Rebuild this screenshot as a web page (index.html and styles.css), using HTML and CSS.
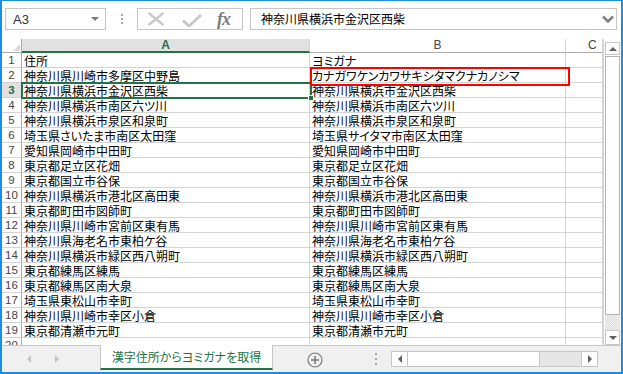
FILE: index.html
```html
<!DOCTYPE html>
<html lang="ja">
<head>
<meta charset="utf-8">
<title>Excel</title>
<link rel="stylesheet" href="styles.css">
</head>
<body>
<div class="window">
  <div class="fbar">
    <div class="namebox"><span>A3</span><span class="nb-arrow"></span></div>
    <div class="vdots"><i></i><i></i><i></i></div>
    <div class="fbtns">
      <svg class="ic-x" width="18" height="14" viewBox="0 0 18 14"><path d="M1.5 1 L16.5 13 M16.5 1 L1.5 13" stroke="#c8c8c8" stroke-width="2.3" fill="none"/></svg>
      <svg class="ic-ok" width="20" height="13" viewBox="0 0 20 13"><path d="M1 6.5 L7 12 L19 1" stroke="#c8c8c8" stroke-width="2.8" fill="none"/></svg>
      <span class="fx">fx</span>
    </div>
    <div class="finput"><span class="ftext">神奈川県横浜市金沢区西柴</span><svg class="chev" width="12" height="8" viewBox="0 0 12 8"><path d="M1 1.5 L6 6.5 L11 1.5" stroke="#808080" stroke-width="2.6" fill="none"/></svg></div>
  </div>

  <div class="sheet">
    <div class="grid">
      <div class="row hdr">
        <div class="c rh corner"><svg width="7" height="7" viewBox="0 0 7 7"><path d="M7 0 L7 7 L0 7 Z" fill="#dadada"/></svg></div>
        <div class="c ca sel">A</div>
        <div class="c cb">B</div>
        <div class="c cc">C</div>
      </div>
      <div class="row"><div class="c rh">1</div><div class="c ca">住所</div><div class="c cb">ヨミガナ</div><div class="c cc"></div></div>
      <div class="row"><div class="c rh">2</div><div class="c ca">神奈川県川崎市多摩区中野島</div><div class="c cb">カナガワケンカワサキシタマクナカノシマ</div><div class="c cc"></div></div>
      <div class="row"><div class="c rh selrow">3</div><div class="c ca">神奈川県横浜市金沢区西柴</div><div class="c cb">神奈川県横浜市金沢区西柴</div><div class="c cc"></div></div>
      <div class="row"><div class="c rh">4</div><div class="c ca">神奈川県横浜市南区六ツ川</div><div class="c cb">神奈川県横浜市南区六ツ川</div><div class="c cc"></div></div>
      <div class="row"><div class="c rh">5</div><div class="c ca">神奈川県横浜市泉区和泉町</div><div class="c cb">神奈川県横浜市泉区和泉町</div><div class="c cc"></div></div>
      <div class="row"><div class="c rh">6</div><div class="c ca">埼玉県さいたま市南区太田窪</div><div class="c cb">埼玉県サイタマ市南区太田窪</div><div class="c cc"></div></div>
      <div class="row"><div class="c rh">7</div><div class="c ca">愛知県岡崎市中田町</div><div class="c cb">愛知県岡崎市中田町</div><div class="c cc"></div></div>
      <div class="row"><div class="c rh">8</div><div class="c ca">東京都足立区花畑</div><div class="c cb">東京都足立区花畑</div><div class="c cc"></div></div>
      <div class="row"><div class="c rh">9</div><div class="c ca">東京都国立市谷保</div><div class="c cb">東京都国立市谷保</div><div class="c cc"></div></div>
      <div class="row"><div class="c rh">10</div><div class="c ca">神奈川県横浜市港北区高田東</div><div class="c cb">神奈川県横浜市港北区高田東</div><div class="c cc"></div></div>
      <div class="row"><div class="c rh">11</div><div class="c ca">東京都町田市図師町</div><div class="c cb">東京都町田市図師町</div><div class="c cc"></div></div>
      <div class="row"><div class="c rh">12</div><div class="c ca">神奈川県川崎市宮前区東有馬</div><div class="c cb">神奈川県川崎市宮前区東有馬</div><div class="c cc"></div></div>
      <div class="row"><div class="c rh">13</div><div class="c ca">神奈川県海老名市東柏ケ谷</div><div class="c cb">神奈川県海老名市東柏ケ谷</div><div class="c cc"></div></div>
      <div class="row"><div class="c rh">14</div><div class="c ca">神奈川県横浜市緑区西八朔町</div><div class="c cb">神奈川県横浜市緑区西八朔町</div><div class="c cc"></div></div>
      <div class="row"><div class="c rh">15</div><div class="c ca">東京都練馬区練馬</div><div class="c cb">東京都練馬区練馬</div><div class="c cc"></div></div>
      <div class="row"><div class="c rh">16</div><div class="c ca">東京都練馬区南大泉</div><div class="c cb">東京都練馬区南大泉</div><div class="c cc"></div></div>
      <div class="row"><div class="c rh">17</div><div class="c ca">埼玉県東松山市幸町</div><div class="c cb">埼玉県東松山市幸町</div><div class="c cc"></div></div>
      <div class="row"><div class="c rh">18</div><div class="c ca">神奈川県川崎市幸区小倉</div><div class="c cb">神奈川県川崎市幸区小倉</div><div class="c cc"></div></div>
      <div class="row"><div class="c rh">19</div><div class="c ca">東京都清瀬市元町</div><div class="c cb">東京都清瀬市元町</div><div class="c cc"></div></div>
      <div class="row"><div class="c rh">20</div><div class="c ca"></div><div class="c cb"></div><div class="c cc"></div></div>
      <div class="active-cell"><i class="handle"></i></div>
      <div class="mark"></div>
    </div>
    <div class="vscroll">
      <div class="sbtn"><i class="tri-up"></i></div>
      <div class="vthumb"></div>
      <div class="vtrack"></div>
      <div class="sbtn"><i class="tri-down"></i></div>
    </div>
  </div>

  <div class="tabbar">
    <div class="tabnav"><i class="tri-left pale"></i><i class="tri-right pale"></i></div>
    <div class="tab">漢字住所からヨミガナを取得</div>
    <svg class="addsheet" width="16" height="16" viewBox="0 0 16 16"><circle cx="8" cy="8" r="7" stroke="#7a7a7a" stroke-width="1.2" fill="none"/><path d="M8 4 V12 M4 8 H12" stroke="#7a7a7a" stroke-width="1.6"/></svg>
    <div class="hdots"><i></i><i></i><i></i></div>
    <div class="hscroll">
      <div class="hbtn"><i class="tri-left"></i></div>
      <div class="hthumb"></div>
      <div class="htrack"></div>
      <div class="hbtn right"><i class="tri-right"></i></div>
    </div>
  </div>
</div>
</body>
</html>
```

FILE: styles.css
```css
html, body {
  margin: 0;
  padding: 0;
  background: #fff;
}

.window {
  width: 623px;
  height: 374px;
  box-sizing: border-box;
  border: 2px solid #1c8de0;
  border-top-width: 1px;
  display: flex;
  flex-direction: column;
  background: #fff;
  overflow: hidden;
  font-family: "Noto Sans CJK JP", sans-serif;
  font-feature-settings: "palt";
}

/* ---------- formula bar ---------- */
.fbar {
  flex: none;
  height: 38px;
  box-sizing: border-box;
  padding: 7px 4px 0 3px;
  display: flex;
  align-items: flex-start;
}

.namebox {
  width: 101px;
  height: 22px;
  box-sizing: border-box;
  border: 1px solid #c6c6c6;
  display: flex;
  align-items: center;
  padding-left: 7px;
  font: 13px "Liberation Sans", sans-serif;
  color: #333;
}

.nb-arrow {
  margin-left: auto;
  margin-right: 6px;
  width: 0;
  height: 0;
  border-left: 4px solid transparent;
  border-right: 4px solid transparent;
  border-top: 4px solid #7a7a7a;
}

.vdots {
  width: 31px;
  height: 22px;
  display: flex;
  flex-direction: column;
  align-items: center;
  justify-content: center;
  gap: 2px;
}

.vdots i, .hdots i {
  display: block;
  width: 2px;
  height: 2px;
  background: #a8a8a8;
}

.fbtns {
  width: 106px;
  height: 22px;
  box-sizing: border-box;
  border: 1px solid #c6c6c6;
  display: flex;
  align-items: center;
  padding-left: 9px;
}

.ic-ok {
  margin-left: 17px;
  margin-top: 2px;
}

.fx {
  margin-left: 15px;
  font: italic bold 18px "Liberation Serif", serif;
  color: #7d7d7d;
  line-height: 18px;
  letter-spacing: -1px;
}

.finput {
  flex: 1;
  height: 22px;
  box-sizing: border-box;
  margin-left: 7px;
  border: 1px solid #c6c6c6;
  display: flex;
  align-items: center;
  padding-left: 10px;
  padding-right: 2px;
  font-size: 12px;
  color: #000;
}

.ftext {
  flex: 1;
  line-height: 14px;
}

/* ---------- sheet ---------- */
.sheet {
  flex: none;
  height: 306px;
  display: flex;
}

.grid {
  width: 601px;
  height: 306px;
  position: relative;
  overflow: hidden;
}

.row {
  display: flex;
  height: 15px;
}

.c {
  flex: none;
  box-sizing: border-box;
  height: 100%;
  border-right: 1px solid #d4d4d4;
  border-bottom: 1px solid #d4d4d4;
  padding-left: 2px;
  font-size: 12px;
  line-height: 15px;
  white-space: nowrap;
  overflow: hidden;
  color: #000;
}

.rh {
  width: 20px;
  padding-left: 0;
  text-align: center;
  font: 11.5px/15px "Liberation Sans", sans-serif;
  color: #444;
  border-right-color: #ababab;
}

.rh.selrow {
  background: #e1e1e1;
  color: #217346;
  font-weight: bold;
}

.ca { width: 288px; }
.cb { width: 256px; }
.cc { width: 37px; }

.row.hdr {
  height: 14px;
}

.hdr .c {
  border-bottom: 1px solid #ababab;
  border-right-color: #d4d4d4;
  text-align: center;
  font: 12px/13px "Liberation Sans", sans-serif;
  color: #444;
  padding-left: 0;
}

.hdr .corner {
  display: flex;
  align-items: flex-end;
  justify-content: flex-end;
  padding: 0 1px 1px 0;
  border-right-color: #ababab;
}

.hdr .sel {
  background: #e1e1e1;
  border-bottom: 2px solid #217346;
  color: #217346;
  font-weight: bold;
}

.hdr .cc {
  text-align: left;
  padding-left: 22px;
}

.active-cell {
  position: absolute;
  left: 19px;
  top: 43px;
  width: 291px;
  height: 17px;
  box-sizing: border-box;
  border: 2px solid #217346;
}

.handle {
  position: absolute;
  right: -4px;
  bottom: -4px;
  width: 6px;
  height: 6px;
  box-sizing: border-box;
  background: #217346;
  border: 1px solid #fff;
}

.mark {
  position: absolute;
  left: 308px;
  top: 28px;
  width: 260px;
  height: 19px;
  box-sizing: border-box;
  border: 2px solid #ff0000;
}

/* ---------- vertical scrollbar ---------- */
.vscroll {
  width: 18px;
  box-sizing: border-box;
  padding: 3px 1px 0 1px;
  display: flex;
  flex-direction: column;
  border-left: 1px solid #d4d4d4;
}

.sbtn {
  flex: none;
  height: 13px;
  box-sizing: border-box;
  border: 1px solid #c6c6c6;
  background: #fff;
  display: flex;
  align-items: center;
  justify-content: center;
}

.sbtn:last-child {
  height: 15px;
}

.vthumb {
  flex: none;
  height: 259px;
  margin-top: 1px;
  box-sizing: border-box;
  border: 1px solid #b4b4b4;
  background: #fff;
}

.vtrack {
  flex: 1;
  background: repeating-conic-gradient(#dcdcdc 0 25%, #f3f3f3 0 50%) 0 0 / 2px 2px;
}

.tri-up, .tri-down, .tri-left, .tri-right {
  display: block;
  width: 0;
  height: 0;
}

.tri-up {
  border-left: 4px solid transparent;
  border-right: 4px solid transparent;
  border-bottom: 4px solid #606060;
}

.tri-down {
  border-left: 4px solid transparent;
  border-right: 4px solid transparent;
  border-top: 4px solid #606060;
}

.tri-left {
  border-top: 4px solid transparent;
  border-bottom: 4px solid transparent;
  border-right: 4px solid #606060;
}

.tri-right {
  border-top: 4px solid transparent;
  border-bottom: 4px solid transparent;
  border-left: 4px solid #606060;
}

.tri-left.pale { border-right-color: #c4c4c4; }
.tri-right.pale { border-left-color: #c4c4c4; }

/* ---------- tab bar ---------- */
.tabbar {
  flex: 1;
  display: flex;
  align-items: flex-start;
  background: #f0f0f0;
  border-top: 1px solid #c6c6c6;
}

.tabnav {
  width: 98px;
  height: 26px;
  display: flex;
  align-items: center;
  padding-left: 25px;
  gap: 24px;
  box-sizing: border-box;
}

.tab {
  width: 173px;
  height: 25px;
  margin-top: -1px;
  box-sizing: border-box;
  background: #fff;
  border-left: 1px solid #c6c6c6;
  border-right: 1px solid #c6c6c6;
  border-bottom: 2px solid #217346;
  display: flex;
  align-items: center;
  justify-content: center;
  font-size: 12px;
  color: #217346;
  white-space: nowrap;
}

.addsheet {
  margin-left: 34px;
  margin-top: 6px;
}

.hdots {
  margin-left: 52px;
  height: 26px;
  display: flex;
  flex-direction: column;
  justify-content: center;
  gap: 3px;
}

.hscroll {
  margin-left: 14px;
  margin-top: 5px;
  width: 207px;
  height: 16px;
  box-sizing: border-box;
  border: 1px solid #c6c6c6;
  background: #e6e6e6;
  display: flex;
}

.hbtn {
  width: 15px;
  background: #fff;
  border-right: 1px solid #c6c6c6;
  display: flex;
  align-items: center;
  justify-content: center;
}

.hbtn.right {
  border-right: 0;
  border-left: 1px solid #c6c6c6;
}

.hthumb {
  width: 131px;
  background: #fff;
  border-right: 1px solid #c6c6c6;
}

.htrack {
  flex: 1;
}
```
